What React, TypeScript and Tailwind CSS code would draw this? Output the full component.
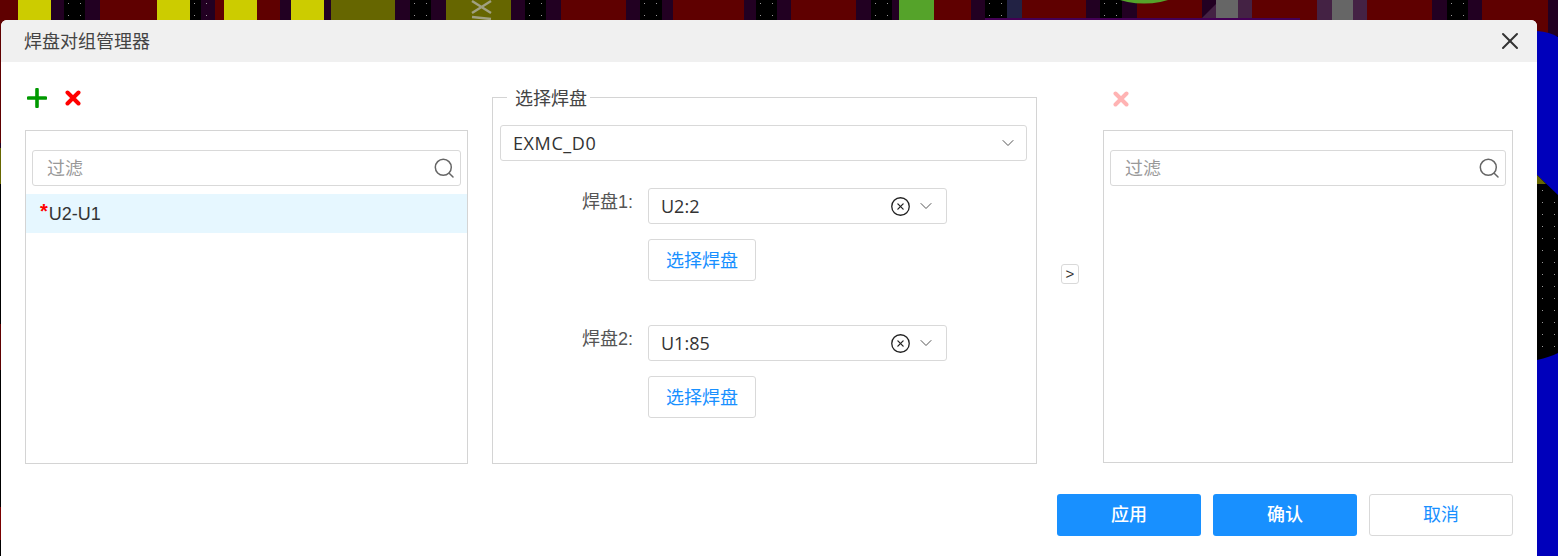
import { X, ChevronDown, CircleX } from "lucide-react";

const cjk = "font-['Liberation_Sans','Noto_Sans_CJK_SC',sans-serif]";

// pcb canvas behind the dialog
const strip: [number, number, string][] = [
  [0, 18, "#5f0000"], [18, 51, "#cccc00"], [51, 64, "#220022"], [64, 85, "#000000"], [85, 100, "#220022"],
  [100, 157, "#5f0000"], [157, 190, "#cccc00"], [190, 201, "#000000"], [201, 215, "#220022"], [215, 224, "#5f0000"],
  [224, 257, "#cccc00"], [257, 280, "#5f0000"], [280, 291, "#220022"], [291, 324, "#cccc00"], [324, 331, "#220022"],
  [331, 395, "#666600"], [395, 410, "#220022"], [410, 431, "#000000"], [431, 446, "#220022"], [446, 511, "#666600"],
  [511, 525, "#220022"], [525, 546, "#000000"], [546, 561, "#220022"], [561, 626, "#5f0000"], [626, 640, "#220022"],
  [640, 662, "#000000"], [662, 673, "#220022"], [673, 744, "#5f0000"], [744, 756, "#220022"], [756, 777, "#000000"],
  [777, 791, "#220022"], [791, 856, "#5f0000"], [856, 871, "#220022"], [871, 892, "#000000"], [892, 899, "#220022"],
  [899, 934, "#55a32a"], [934, 971, "#5f0000"], [971, 985, "#220022"], [985, 1007, "#000000"], [1007, 1022, "#222244"],
  [1022, 1086, "#5f0000"], [1086, 1100, "#220022"], [1100, 1122, "#000000"], [1122, 1137, "#220022"], [1137, 1202, "#5f0000"],
  [1202, 1216, "#220022"], [1216, 1238, "#666666"], [1238, 1252, "#442244"], [1252, 1317, "#5f0000"], [1317, 1332, "#442244"],
  [1332, 1353, "#666666"], [1353, 1367, "#442244"], [1367, 1432, "#5f0000"], [1432, 1447, "#220022"], [1447, 1468, "#000000"],
  [1468, 1482, "#220022"], [1482, 1548, "#5f0000"], [1548, 1558, "#220022"],
];
const sideDots = Array.from({ length: 14 }, (_, i) => 190 + i * 12);

function PcbBackdrop() {
  return (
    <svg className="absolute inset-0" width={1558} height={556} viewBox="0 0 1558 556">
      <rect width="1558" height="556" fill="#000000" />
      {strip.map(([a, b, c]) => (
        <rect key={a} x={a} y={0} width={b - a} height={36} fill={c} />
      ))}
      {strip
        .filter((s) => s[2] === "#000000")
        .map(([a]) => (
          <g key={a} fill="#999999">
            <rect x={a + 4} y={3} width="1" height="1" />
            <rect x={a + 16} y={3} width="1" height="1" />
            <rect x={a + 4} y={15} width="1" height="1" />
            <rect x={a + 16} y={15} width="1" height="1" />
          </g>
        ))}
      <circle cx="1144" cy="-80.5" r="84" fill="#55a32a" />
      <path d="M1202 18L1216 4V18Z" fill="#442244" />
      <rect x="985" y="18" width="315" height="4" fill="#440055" />
      <path d="M472 1l19 12M491 1L472 13M472 17l19 2" stroke="#a0a080" strokeWidth="2.4" fill="none" />
      {/* left edge that peeks out next to the dialog */}
      <rect x="0" y="36" width="1" height="107" fill="#5f0000" />
      <rect x="0" y="143" width="1" height="5" fill="#220022" />
      <rect x="0" y="148" width="1" height="36" fill="#666600" />
      <rect x="0" y="324" width="1" height="46" fill="#5f0000" />
      <rect x="0" y="507" width="1" height="33" fill="#7a0000" />
      {/* right edge */}
      <path d="M1537 31 Q1550 32 1558 37 V195 L1537 175 Z" fill="#0000bb" />
      <path d="M1537 175 L1546 184 H1537 Z" fill="#666600" />
      <path d="M1537 360 Q1550 357 1558 353 V556 H1537 Z" fill="#0000bb" />
      {sideDots.map((y) => (
        <g key={y} fill="#999999">
          <rect x="1542" y={y} width="1" height="1" />
          {y > 200 && y < 350 ? <rect x="1554" y={y} width="1" height="1" /> : null}
        </g>
      ))}
    </svg>
  );
}

function SearchGlyph() {
  return (
    <svg width="20" height="20" viewBox="0 0 20 20" fill="none" stroke="#666666" strokeWidth="1.5">
      <circle cx="9.3" cy="9.3" r="8" />
      <path d="M15.2 15.2L19 19" strokeLinecap="round" />
    </svg>
  );
}

function FilterInput() {
  return (
    <div className="flex h-9 items-center rounded-[3px] border border-[#d9d9d9] bg-white pl-[14px] pr-[6px]">
      <span className={`flex-1 pt-[3px] text-[18px] text-[#999999] ${cjk}`}>过滤</span>
      <SearchGlyph />
    </div>
  );
}

function PadField({ label, value }: { label: string; value: string }) {
  return (
    <div className="flex">
      <div className={`w-[148px] pt-[2px] pr-[15px] text-right text-[18px] leading-[24px] text-[#555555] ${cjk}`}>{label}</div>
      <div className="flex flex-col gap-[15px]">
        <div className="flex h-9 w-[299px] items-center rounded-[3px] border border-[#d9d9d9] pl-3 pr-[10px]">
          <span className="flex-1 font-['Open_Sans',sans-serif] text-[18px] text-[#333333]">{value}</span>
          <CircleX size={21} strokeWidth={1.5} className="mr-[5px] text-[#222222]" />
          <ChevronDown size={20} strokeWidth={1.2} className="text-[#555555]" />
        </div>
        <button className={`h-[42px] w-[108px] rounded-[3px] border border-[#d9d9d9] bg-white pt-[2px] text-[18px] text-[#1890ff] ${cjk}`}>
          选择焊盘
        </button>
      </div>
    </div>
  );
}

export default function App() {
  return (
    <div className="relative h-[556px] w-[1558px] overflow-hidden">
      <PcbBackdrop />
      <div className="absolute left-[1px] top-[20px] flex h-[536px] w-[1536px] flex-col rounded-t-[6px] bg-white">
        <div className="flex h-[42px] items-center justify-between rounded-t-[6px] bg-[#f0f0f0] pl-[23px] pr-[13px]">
          <span className={`pt-[2px] text-[18px] text-[#444444] ${cjk}`}>焊盘对组管理器</span>
          <X size={28} strokeWidth={1.7} className="text-[#333333]" />
        </div>

        <div className="flex pl-[24px] pr-[24px]">
          {/* left list */}
          <div className="w-[443px] shrink-0">
            <div className="flex h-[68px] items-center gap-[18px] pl-[2px] pt-[3px]">
              <svg width="20" height="20" viewBox="0 0 20 20">
                <path d="M10 1.5v17M1.5 10h17" stroke="#009900" strokeWidth="3.6" strokeLinecap="round" />
              </svg>
              <svg width="16" height="16" viewBox="0 0 16 16">
                <path d="M2.5 2.5l11 11M13.5 2.5l-11 11" stroke="#ff0000" strokeWidth="4" strokeLinecap="round" />
              </svg>
            </div>
            <div className="h-[334px] border border-[#d4d4d4]">
              <div className="px-[6px] pt-[19px]">
                <FilterInput />
              </div>
              <div className="mt-2 flex h-[39px] items-center bg-[#e6f7ff] pl-[14px] font-['Liberation_Sans',sans-serif] text-[18px] text-[#333333]">
                <span className="mr-[1px] -mt-[6px] text-[20px] font-bold text-[#ff0000]">*</span>
                <span className="pt-[2px]">U2-U1</span>
              </div>
            </div>
          </div>

          {/* pad selector */}
          <div className="ml-[24px] w-[545px] shrink-0 pt-[22px]">
            <fieldset className="h-[380px] border border-[#d4d4d4] pl-[7px] pr-[9px] pt-[15px]">
              <legend className={`ml-[7px] pl-[8px] pr-[3px] pt-[4px] text-[18px] leading-[22px] text-[#444444] ${cjk}`}>选择焊盘</legend>
              <div className="flex h-9 items-center rounded-[3px] border border-[#d9d9d9] pl-3 pr-[8px]">
                <span className="flex-1 font-['Open_Sans',sans-serif] text-[18px] tracking-[0.6px] text-[#333333]">EXMC_D0</span>
                <ChevronDown size={20} strokeWidth={1.2} className="text-[#555555]" />
              </div>
              <div className="mt-[27px] flex flex-col gap-[44px]">
                <PadField label="焊盘1:" value="U2:2" />
                <PadField label="焊盘2:" value="U1:85" />
              </div>
            </fieldset>
          </div>

          {/* move + right list */}
          <div className="flex w-[66px] shrink-0 items-center justify-center pt-[22px]">
            <span className="flex h-5 w-[18px] items-center justify-center rounded-[3px] border border-[#d9d9d9] font-['Liberation_Sans',sans-serif] text-[15px] text-[#333333]">
              &gt;
            </span>
          </div>
          <div className="w-[410px] shrink-0">
            <div className="flex h-[68px] items-center pl-[10px] pt-[6px]">
              <svg width="16" height="16" viewBox="0 0 16 16">
                <path d="M2.5 2.5l11 11M13.5 2.5l-11 11" stroke="#ffb3b3" strokeWidth="4" strokeLinecap="round" />
              </svg>
            </div>
            <div className="h-[333px] border border-[#d4d4d4] px-[6px] pt-[19px]">
              <FilterInput />
            </div>
          </div>
        </div>

        <div className={`mt-[30px] flex justify-end gap-[12px] pr-[24px] text-[18px] ${cjk}`}>
          <button className="h-[42px] w-[144px] rounded-[3px] bg-[#1890ff] pt-[1px] font-medium text-white">应用</button>
          <button className="h-[42px] w-[144px] rounded-[3px] bg-[#1890ff] pt-[1px] font-medium text-white">确认</button>
          <button className="h-[42px] w-[144px] rounded-[3px] border border-[#d9d9d9] bg-white pt-[1px] text-[#1890ff]">取消</button>
        </div>
      </div>
    </div>
  );
}
